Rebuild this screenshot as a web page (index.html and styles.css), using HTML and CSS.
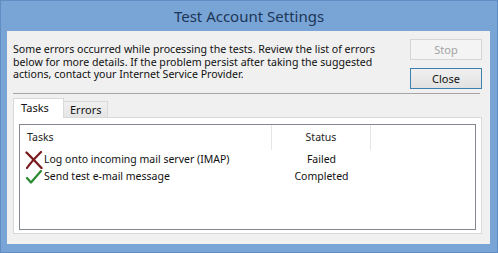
FILE: index.html
```html
<!DOCTYPE html>
<html>
<head>
    <title>Test Account Settings</title>
    <link rel="stylesheet" href="styles.css">
</head>
<body>
    <div class="window">
        <div class="titlebar">Test Account Settings</div>
        <div class="client">
            <div class="top">
                <div class="message">
                    Some errors occurred while processing the tests. Review the list of errors<br>
                    below for more details. If the problem persist after taking the suggested<br>
                    actions, contact your Internet Service Provider.
                </div>
                <div class="buttons">
                    <button type="button" class="btn" disabled>Stop</button>
                    <button type="button" class="btn btn-default">Close</button>
                </div>
            </div>

            <div class="tabs">
                <div class="tab active">Tasks</div>
                <div class="tab">Errors</div>
            </div>
            <div class="panel">
                <div class="listview">
                    <div class="lv-header">
                        <div class="col col-task">Tasks</div>
                        <div class="col col-status">Status</div>
                        <div class="col col-rest"></div>
                    </div>
                    <div class="lv-row">
                        <div class="col col-task">
                            <svg class="icon" width="18" height="18" viewBox="0 0 18 18">
                                <path d="M1.5 1.5 C5 5 10 10 16.5 17" stroke="#7a1b1f" stroke-width="2.4" fill="none" stroke-linecap="round"/>
                                <path d="M16 1 C11 6 6 11 2 17" stroke="#7a1b1f" stroke-width="2.2" fill="none" stroke-linecap="round"/>
                            </svg>
                            Log onto incoming mail server (IMAP)
                        </div>
                        <div class="col col-status">Failed</div>
                    </div>
                    <div class="lv-row">
                        <div class="col col-task">
                            <svg class="icon" width="18" height="18" viewBox="0 0 18 18">
                                <path d="M2 10 L6 14.5 L16 3" stroke="#2a8a30" stroke-width="2.2" fill="none" stroke-linecap="round" stroke-linejoin="round"/>
                            </svg>
                            Send test e-mail message
                        </div>
                        <div class="col col-status">Completed</div>
                    </div>
                </div>
            </div>
        </div>
    </div>
</body>
</html>
```

FILE: styles.css
```css
body {
    margin: 0;
    background-color: #78a4d6;
    font-family: "Noto Sans", "Open Sans", sans-serif;
}

.window {
    width: 498px;
    height: 253px;
    background-color: #78a4d6;
    box-sizing: border-box;
    border: 1px solid #5f8dc4;
}

.titlebar {
    height: 30px;
    line-height: 30px;
    text-align: center;
    font-size: 15px;
    color: #1d3656;
}

.client {
    margin: 0 7px 0 6px;
    height: 213px;
    background-color: #f0f0f0;
    padding: 0 8px 0 6px;
    box-sizing: border-box;
    font-size: 10.5px;
    color: #111;
}

.top {
    display: flex;
    height: 63px;
    border-bottom: 1px solid #a5a5a5;
    box-sizing: border-box;
    margin-right: 2px;
}

.message {
    flex: 1;
    padding-top: 12px;
    line-height: 12.5px;
    font-size: 10.6px;
    white-space: nowrap;
}

.buttons {
    width: 72px;
    margin-right: -2px;
    padding-top: 8px;
    display: flex;
    flex-direction: column;
    gap: 8px;
}

.btn {
    height: 21px;
    font-family: inherit;
    font-size: 11px;
    color: #111;
    background: linear-gradient(#efefef, #e3e3e3);
    border: 1px solid #adadad;
    padding: 0;
}

.btn:disabled {
    color: #a3a3a3;
    background: #f4f4f4;
    border-color: #d5d5d5;
}

.btn-default {
    border-color: #3c7fb1;
    background: linear-gradient(#f0f0f0, #e1e1e1);
}

.tabs {
    display: flex;
    align-items: flex-end;
    height: 19px;
    margin-top: 4px;
    position: relative;
    z-index: 1;
}

.tab {
    height: 16px;
    line-height: 15px;
    padding: 0 6px;
    border: 1px solid #d9d9d9;
    border-bottom: none;
    background: linear-gradient(#f0f0f0, #e5e5e5);
    box-sizing: border-box;
    font-size: 11px;
}

.tab + .tab {
    border-left: none;
}

.tab.active {
    height: 20px;
    margin-bottom: -1px;
    width: 51px;
    background: #ffffff;
    line-height: 17px;
    padding: 0 7px;
}

.panel {
    height: 117px;
    border: 1px solid #d9d9d9;
    background: #ffffff;
    box-sizing: border-box;
    padding: 6px 5px 3px 5px;
}

.listview {
    height: 106px;
    border: 1px solid #828790;
    box-sizing: border-box;
    background: #ffffff;
}

.lv-header,
.lv-row {
    display: flex;
}

.lv-header {
    height: 25px;
    line-height: 25px;
    color: #1e1e1e;
    margin-bottom: 1px;
}

.lv-header .col-task,
.lv-header .col-status {
    border-right: 1px solid #e5e5e5;
}

.lv-row {
    height: 17px;
    line-height: 17px;
}

.col {
    box-sizing: border-box;
}

.col-task {
    width: 252px;
    padding-left: 7px;
    display: flex;
    align-items: center;
}

.lv-row .col-task {
    padding-left: 5px;
}

.col-status {
    width: 99px;
    text-align: center;
}

.col-rest {
    flex: 1;
}

.icon {
    margin-right: 1px;
    flex-shrink: 0;
}
```
